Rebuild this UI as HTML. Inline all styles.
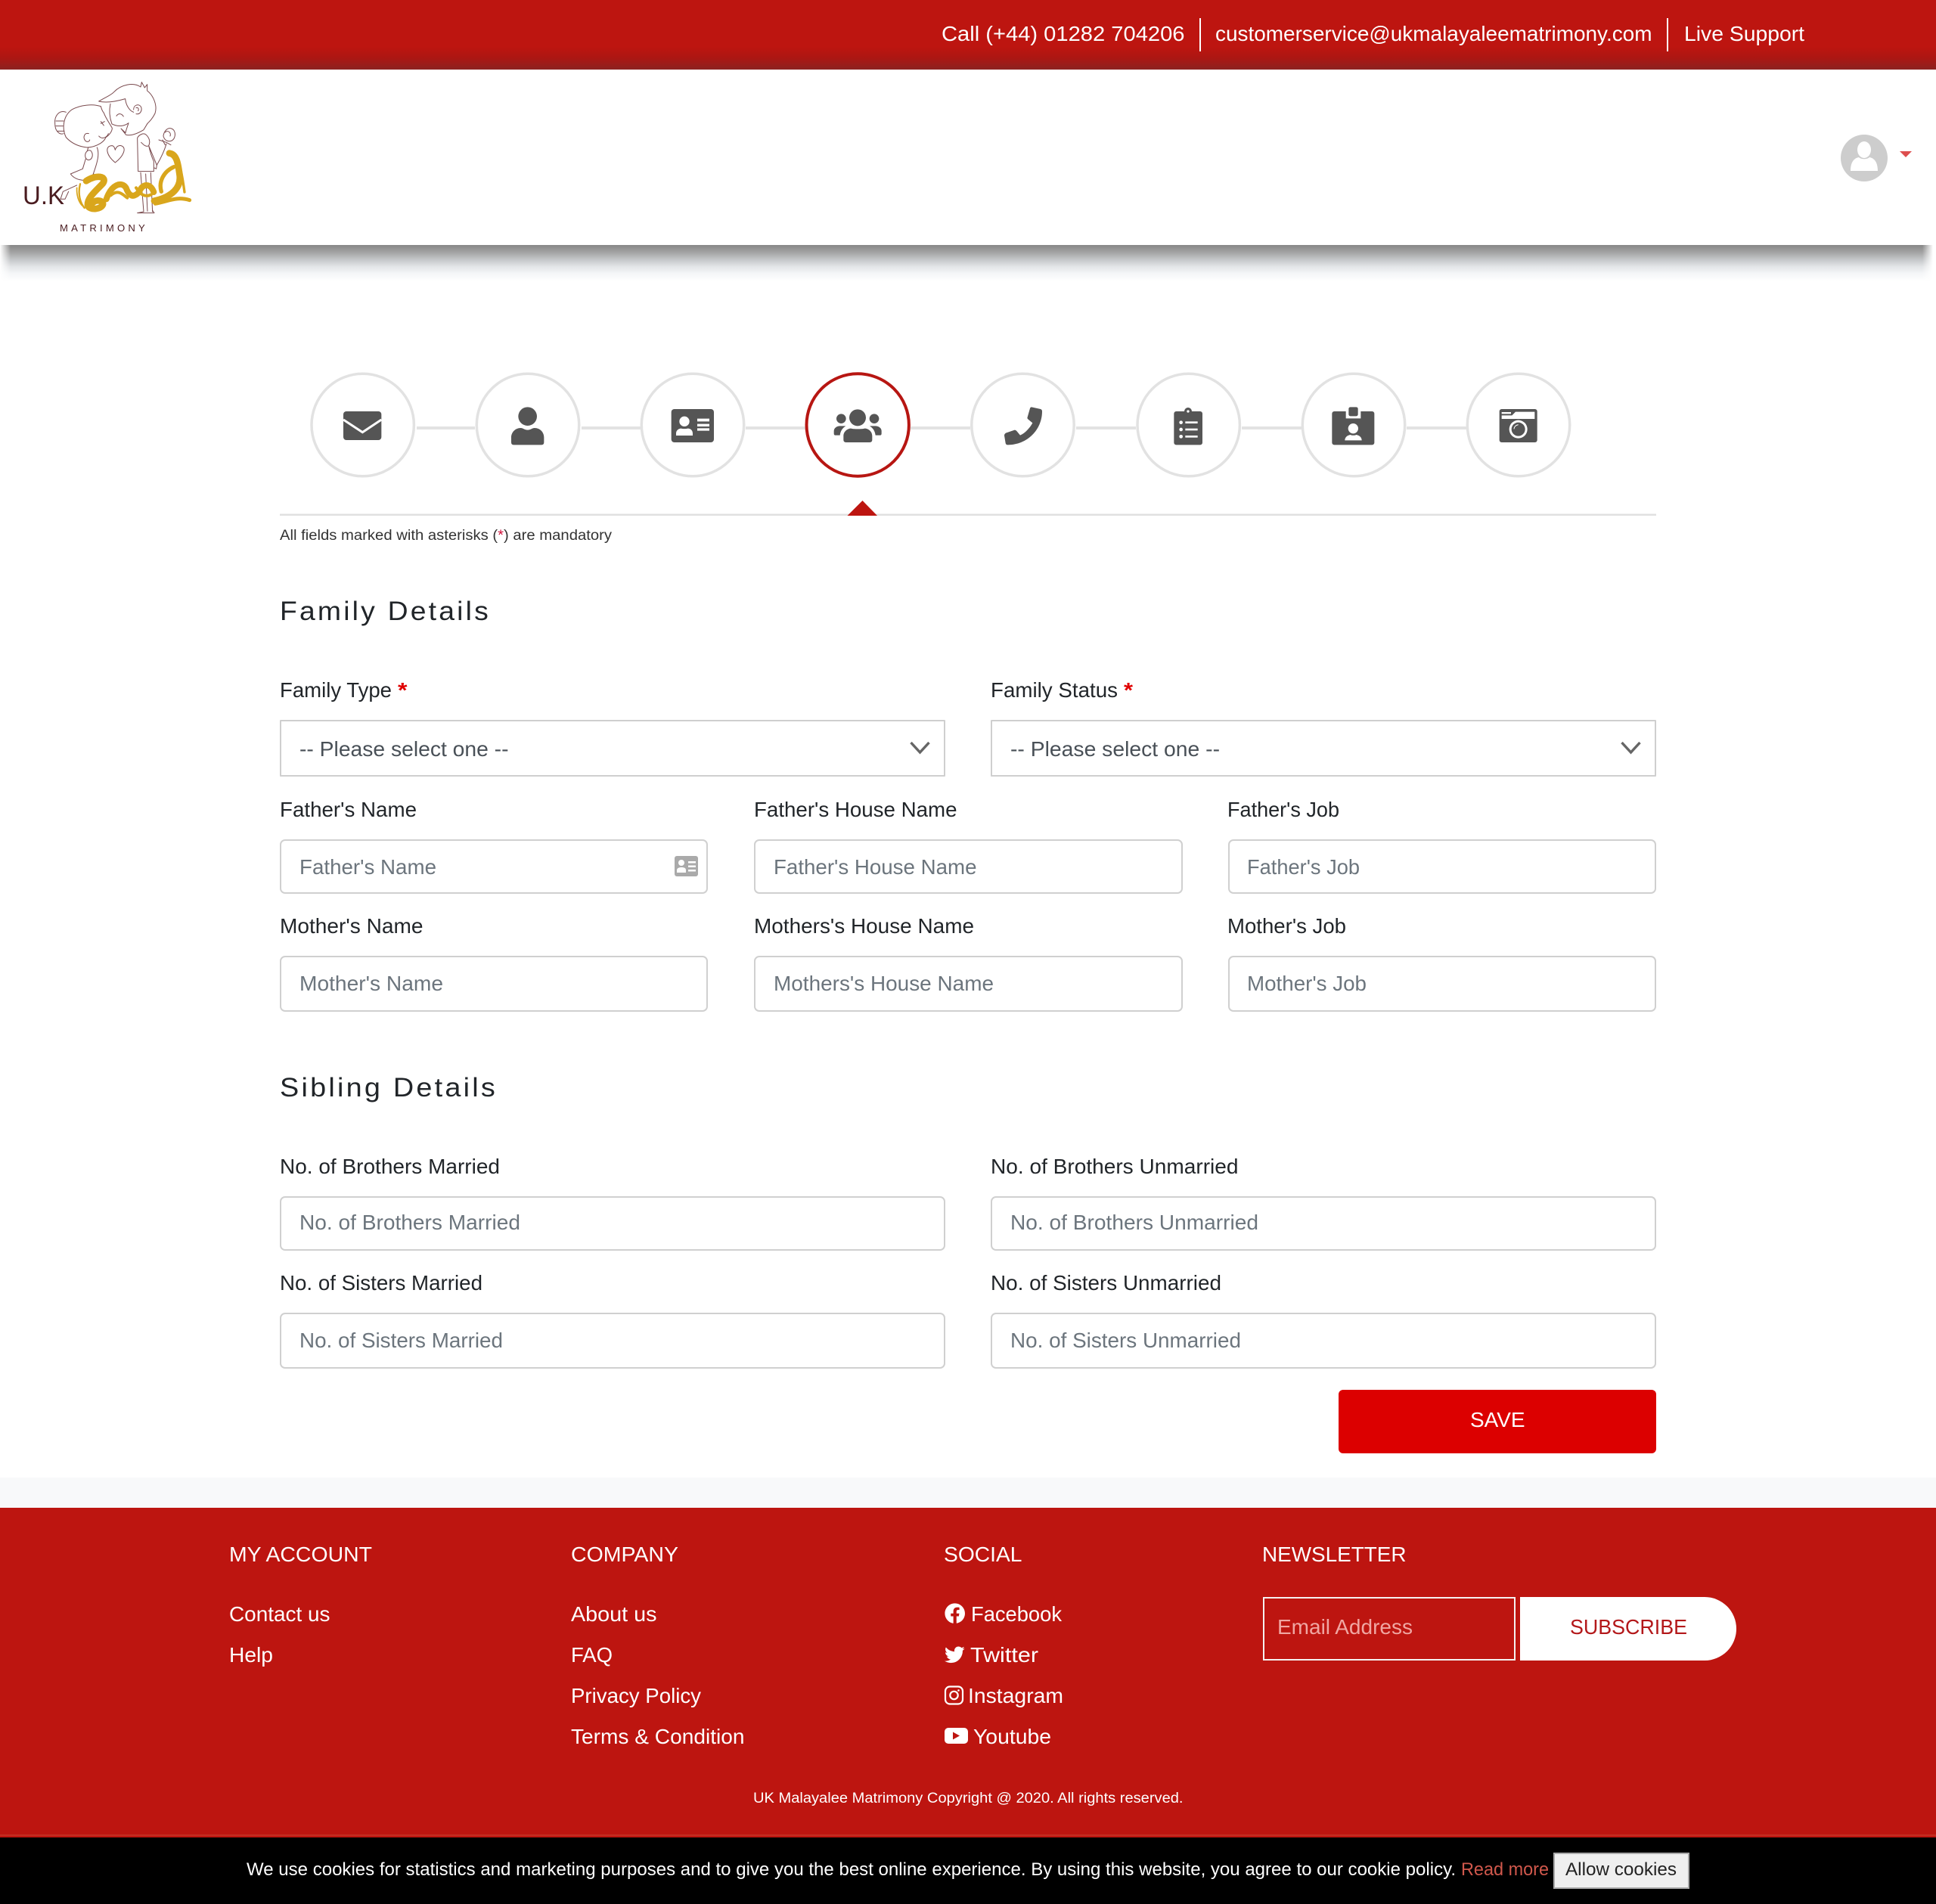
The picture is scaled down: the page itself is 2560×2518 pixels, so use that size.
<!DOCTYPE html>
<html lang="en"><head><meta charset="utf-8"><title>UK Malayalee Matrimony - Family Details</title>
<style>
html,body{margin:0;padding:0;background:#fff}
body{position:relative;width:2560px;height:2518px;overflow:hidden;font-family:"Liberation Sans",Arial,sans-serif;color:#212529}
.t{position:absolute;white-space:nowrap;line-height:1;font-size:27.5px;transform-origin:0 0;top:calc(var(--b)*1px - .8465em)}
.w{color:#fff}
.ph{color:#6c757d}
.sl{color:#495057}
.h{font-size:35px;letter-spacing:3px;color:#212529}
.r{color:#e00000;font-weight:700}
.box{position:absolute;box-sizing:border-box;display:block;margin:0;padding:0;background:#fff;border:2.5px solid #d0d0d0;border-radius:7px;outline:0}
.sel{border-radius:1px;border-color:#cfcfcf}
.abs{position:absolute}
svg{position:absolute;left:0;top:0}
</style></head><body>
<header>
<div class="abs" style="left:0;top:0;width:2560px;height:92px;background:linear-gradient(#bd1510 0,#bd1510 62px,#ad1612 76px,#8c2220 92px)"></div>
<div class="abs" style="left:0;top:324px;width:2560px;height:48px;background:linear-gradient(rgba(0,0,0,.47) 0,rgba(0,0,0,.37) 9px,rgba(5,15,25,.24) 19px,rgba(10,30,50,.11) 29px,rgba(20,50,90,.045) 38px,rgba(0,0,0,0) 48px);-webkit-mask-image:linear-gradient(90deg,transparent 0,#000 14px,#000 2542px,transparent 2556px)"></div>
<span class="t w" style="--b:54.5;left:1244.5px" w="321.5">Call (+44) 01282 704206</span>
<div class="abs" style="left:1586px;top:24px;width:2px;height:44px;background:#fff"></div>
<span class="t w" style="--b:54.5;left:1607px" w="577.5">customerservice@ukmalayaleematrimony.com</span>
<div class="abs" style="left:2204px;top:24px;width:2px;height:44px;background:#fff"></div>
<span class="t w" style="--b:54.5;left:2226.5px" w="159">Live Support</span>
<span class="t" style="--b:270.5;left:30px;font-size:34px;color:#4a1c20" w="55">U.K</span>
<span class="t" style="--b:307;left:79px;font-size:12.5px;letter-spacing:4px;color:#4a1c20" w="117">MATRIMONY</span>
</header>

<svg width="2560" height="2518" viewBox="0 0 2560 2518" style="z-index:0">
<!-- logo -->
<g transform="scale(.3333)" fill="none" stroke="#7a4a4e" stroke-width="3" stroke-linecap="round" stroke-linejoin="round">
<path d="M392 402C425 410 470 400 497 392C500 420 515 440 530 445M392 402C420 385 440 378 452 365C480 335 530 325 558 345L562 326L574 348L584 335L584 360C610 380 625 420 615 450C605 470 595 480 585 490"/>
<path d="M438 412C432 440 436 470 444 492M444 492C470 505 495 500 510 488C505 505 500 515 498 527L480 510L500 535C520 540 545 530 570 515L585 490"/>
<path d="M530 435C530 415 552 410 560 425C565 440 555 455 540 452M540 428C548 425 552 432 548 440"/>
<path d="M462 460C470 448 482 450 490 462"/>
<path d="M400 422C370 412 320 415 285 435C250 460 245 510 262 545C285 570 315 582 345 585C370 585 410 570 420 545C435 535 445 520 445 508C435 490 420 470 412 448C405 440 402 430 400 422Z"/>
<path d="M262 445C235 435 215 460 218 490C218 525 240 535 252 530M222 480H252M222 500H250M228 520H255"/>
<path d="M352 530C335 525 328 545 338 558C345 565 355 562 356 555"/>
<path d="M392 540C405 555 425 545 430 530M400 490L415 482M400 482L412 498"/>
<path d="M350 585L346 600M385 585C395 610 388 640 370 690M345 600C335 610 335 630 350 635C365 635 372 615 362 600C358 595 350 595 345 600M340 630L328 670L280 690C290 705 310 715 335 715L372 690"/>
<path d="M305 735L250 760L240 790L258 790L272 760"/>
<path d="M457 645C420 615 415 578 445 578C455 580 455 590 457 595C462 580 472 576 480 578C505 585 490 620 457 645Z"/>
<path d="M545 548C550 535 570 525 580 535C590 545 598 560 590 578C580 585 570 575 560 565M545 548L548 680L610 680L610 640C600 620 595 600 590 578M590 578L622 655L620 670L610 665"/>
<path d="M558 685L570 840M598 685L605 840M570 840L545 845H612L605 835M578 690L585 838"/>
<path d="M622 655C640 625 655 590 660 570M630 555L660 565L678 575M645 555L655 575"/>
<path d="M648 540C650 520 665 505 680 510C695 515 698 535 690 550C680 565 655 565 648 540ZM655 525C665 515 680 525 675 540"/>
<g stroke="#d9a61c" stroke-width="26">
<path d="M342 718C380 692 428 698 408 728C380 758 345 785 348 815C355 835 400 832 408 812C412 795 380 790 368 805"/>
<path d="M318 730C308 770 318 805 335 825" stroke-width="7"/><path d="M305 745C303 775 312 800 325 815" stroke-width="5"/>
<path d="M422 790C442 732 482 718 500 745C512 780 530 786 552 762C564 728 596 724 610 762" stroke-width="24"/>
<path d="M440 775C470 748 490 775 505 785M540 745C555 770 575 785 600 772" stroke-width="12"/>
<path d="M612 797C680 782 722 745 712 690C706 645 700 612 672 608" stroke-width="26"/>
<path d="M640 760C628 720 650 680 690 662" stroke-width="16"/>
<path d="M616 808C670 798 700 778 752 794" stroke-width="15"/>
<path d="M695 620C716 650 725 710 732 762" stroke-width="10"/>
</g>
</g>
<!-- avatar -->
<clipPath id="av"><circle cx="2465" cy="209" r="31"/></clipPath>
<circle cx="2465" cy="209" r="31" fill="#cdcdcd"/>
<g clip-path="url(#av)" fill="#fff"><ellipse cx="2465" cy="198" rx="9" ry="11"/><path d="M2447 226C2447 214 2452 209 2458 208C2461 211 2469 211 2472 208C2478 209 2483 214 2483 226Z"/></g>
<path d="M2512 200H2528L2520 208Z" fill="#dd4e4e"/>

<!-- step connectors -->
<g fill="#e3e3e3">
<rect x="551" y="564" width="77" height="4"/><rect x="769" y="564" width="78" height="4"/><rect x="986" y="564" width="79" height="4"/><rect x="1204" y="564" width="79" height="4"/><rect x="1423" y="564" width="79" height="4"/><rect x="1642" y="564" width="79" height="4"/><rect x="1860" y="564" width="79" height="4"/>
</g>
<g fill="#fff" stroke="#e2e2e2" stroke-width="3.5">
<circle cx="479.7" cy="562" r="67.7"/><circle cx="698" cy="562" r="67.7"/><circle cx="916" cy="562" r="67.7"/>
<circle cx="1134.2" cy="562" r="67.7" stroke="#b71612" stroke-width="4"/>
<circle cx="1352.5" cy="562" r="67.7"/><circle cx="1571.7" cy="562" r="67.7"/><circle cx="1790" cy="562" r="67.7"/><circle cx="2008" cy="562" r="67.7"/>
</g>
<!-- step icons -->
<g transform="translate(430 520) scale(.33333)" fill="#555">
<rect x="72" y="72" width="151" height="114" rx="12"/><path d="M72 105L148 155L223 105" fill="none" stroke="#fff" stroke-width="9"/>
<circle cx="803" cy="92" r="37"/>
<path d="M738 195V175C738 155 755 138 775 138C785 138 792 146 803 146C814 146 821 138 831 138C852 138 868 155 868 175V195Q868 205 858 205H748Q738 205 738 195Z"/>
<rect x="1373" y="63" width="169" height="132" rx="12"/>
<circle cx="1425" cy="112" r="20" fill="#fff"/><path d="M1392 168V160C1392 148 1402 140 1412 140C1418 142 1432 142 1438 140C1450 140 1458 148 1458 160V168Z" fill="#fff"/>
<path d="M1476 101H1524V112H1476ZM1476 122H1524V132H1476ZM1476 139H1524V149H1476Z" fill="#fff"/>
</g>
<g transform="translate(1090 520) scale(.33333)" fill="#555">
<circle cx="132" cy="97" r="33"/><circle cx="67" cy="101" r="19"/><circle cx="198" cy="101" r="19"/>
<path d="M38 160V150C38 138 50 130 62 130H85C72 138 64 150 62 167H45Q38 167 38 160ZM227 160V150C227 138 215 130 203 130H180C193 138 201 150 203 167H220Q227 167 227 160Z"/>
<path d="M76 185V170C76 152 92 140 106 140C115 143 150 143 160 140C175 140 190 152 190 170V185Q190 195 180 195H86Q76 195 76 185Z"/>
<path d="M822 55L858 63Q864 65 864 72C864 145 805 205 728 205Q720 205 719 198L714 168Q714 162 720 158L755 146Q760 146 763 150L777 167C797 158 815 138 826 118L808 103Q804 100 806 95L816 60Q818 55 822 55Z"/>
<rect x="1387" y="72" width="113" height="133" rx="9"/><circle cx="1443" cy="72" r="15"/><circle cx="1443" cy="72" r="5" fill="#fff"/>
<g fill="#fff"><circle cx="1415" cy="116" r="7"/><circle cx="1415" cy="144" r="7"/><circle cx="1415" cy="172" r="7"/><rect x="1432" y="112" width="49" height="8"/><rect x="1432" y="140" width="49" height="8"/><rect x="1432" y="168" width="49" height="8"/></g>
</g>
<g transform="translate(1740 520) scale(.33333)" fill="#555">
<rect x="64" y="72" width="168" height="133" rx="9"/>
<path d="M119 72H178V100H119Z" fill="#fff"/><rect x="130" y="55" width="37" height="36" rx="7"/>
<circle cx="148" cy="140" r="20" fill="#fff"/><path d="M115 187C115 175 125 167 137 165C142 168 155 168 160 165C172 167 182 175 182 187Z" fill="#fff"/>
<rect x="728" y="63" width="150" height="132" rx="9"/>
<path d="M737 88H778L792 74H868V102H737Z" fill="#fff"/><rect x="737" y="75" width="37" height="7" fill="#fff"/>
<circle cx="803" cy="143" r="36" fill="#fff"/><circle cx="803" cy="143" r="27"/>
<path d="M786 142C787 132 793 127 803 125" fill="none" stroke="#fff" stroke-width="3"/>
</g>
<!-- divider + pointer -->
<rect x="370" y="679.5" width="1820" height="2.5" fill="#e0e0e0"/>
<path d="M1140.5 662L1160 682H1120.5Z" fill="#bd1510"/>
</svg>

<main>
<span class="t" style="--b:715;left:370px;font-size:19px;color:#333" w="439">All fields marked with asterisks (<span style="color:#d0103a">*</span>) are mandatory</span>

<h2 class="t h" style="--b:820.5;left:370px;margin:0;font-weight:400" w="279">Family Details</h2>
<label class="t" style="--b:922;left:370px" w="148">Family Type</label><span class="t r" style="--b:922;left:525.5px" w="12.5">*</span>
<label class="t" style="--b:922;left:1310px" w="168">Family Status</label><span class="t r" style="--b:922;left:1485.5px" w="12">*</span>
<div class="box sel" style="left:370px;top:952px;width:880px;height:75px"></div>
<div class="box sel" style="left:1310px;top:952px;width:880px;height:75px"></div>
<span class="t sl" style="--b:1000;left:396px" w="276.5">-- Please select one --</span>
<span class="t sl" style="--b:1000;left:1335.5px" w="277">-- Please select one --</span>

<label class="t" style="--b:1080.5;left:370px" w="181">Father's Name</label>
<label class="t" style="--b:1080.5;left:996.5px" w="268.5">Father's House Name</label>
<label class="t" style="--b:1080.5;left:1623px" w="148">Father's Job</label>
<input class="box" style="left:370px;top:1110px;width:566px;height:72px" readonly>
<input class="box" style="left:996.5px;top:1110px;width:567px;height:72px" readonly>
<input class="box" style="left:1624px;top:1110px;width:566px;height:72px" readonly>
<span class="t ph" style="--b:1156;left:395.5px" w="181">Father's Name</span>
<span class="t ph" style="--b:1156;left:1022.5px" w="268.5">Father's House Name</span>
<span class="t ph" style="--b:1156;left:1648.5px" w="149">Father's Job</span>

<label class="t" style="--b:1234.5;left:370px" w="189.5">Mother's Name</label>
<label class="t" style="--b:1234.5;left:996.5px" w="291">Mothers's House Name</label>
<label class="t" style="--b:1234.5;left:1623px" w="157">Mother's Job</label>
<input class="box" style="left:370px;top:1264px;width:566px;height:73.5px" readonly>
<input class="box" style="left:996.5px;top:1264px;width:567px;height:73.5px" readonly>
<input class="box" style="left:1624px;top:1264px;width:566px;height:73.5px" readonly>
<span class="t ph" style="--b:1310;left:395.5px" w="190">Mother's Name</span>
<span class="t ph" style="--b:1310;left:1022.5px" w="291">Mothers's House Name</span>
<span class="t ph" style="--b:1310;left:1648.5px" w="158">Mother's Job</span>

<h2 class="t h" style="--b:1450.5;left:370px;margin:0;font-weight:400" w="288">Sibling Details</h2>
<label class="t" style="--b:1552;left:370px" w="291">No. of Brothers Married</label>
<label class="t" style="--b:1552;left:1310px" w="327.5">No. of Brothers Unmarried</label>
<input class="box" style="left:370px;top:1582px;width:880px;height:71.5px" readonly>
<input class="box" style="left:1310px;top:1582px;width:880px;height:71.5px" readonly>
<span class="t ph" style="--b:1626.5;left:395.5px" w="292">No. of Brothers Married</span>
<span class="t ph" style="--b:1626.5;left:1336px" w="328">No. of Brothers Unmarried</span>

<label class="t" style="--b:1706.5;left:370px" w="268">No. of Sisters Married</label>
<label class="t" style="--b:1706.5;left:1310px" w="305">No. of Sisters Unmarried</label>
<input class="box" style="left:370px;top:1736px;width:880px;height:73.5px" readonly>
<input class="box" style="left:1310px;top:1736px;width:880px;height:73.5px" readonly>
<span class="t ph" style="--b:1782;left:395.5px" w="269">No. of Sisters Married</span>
<span class="t ph" style="--b:1782;left:1336px" w="305">No. of Sisters Unmarried</span>

<div class="abs" style="left:1770px;top:1838px;width:420px;height:84px;background:#dc0000;border-radius:6px"></div>
<span class="t w" style="--b:1887.5;left:1943.5px" w="72.5">SAVE</span>
</main>

<div class="abs" style="left:0;top:1954px;width:2560px;height:40px;background:#f8f9fa"></div>
<footer>
<div class="abs" style="left:0;top:1994px;width:2560px;height:436px;background:#bd1510"></div>
<div class="abs" style="left:0;top:2426px;width:2560px;height:2px;background:#c42d22"></div>
<div class="abs" style="left:0;top:2430px;width:2560px;height:88px;background:#000"></div>

<span class="t w" style="--b:2065.5;left:303px" w="189">MY ACCOUNT</span>
<span class="t w" style="--b:2065.5;left:755px" w="142">COMPANY</span>
<span class="t w" style="--b:2065.5;left:1248px" w="103.5">SOCIAL</span>
<span class="t w" style="--b:2065.5;left:1669px" w="190.5">NEWSLETTER</span>

<a class="t w" style="--b:2144;left:303px" w="133.5">Contact us</a>
<a class="t w" style="--b:2198;left:303px" w="58">Help</a>
<a class="t w" style="--b:2144;left:755px" w="113.5">About us</a>
<a class="t w" style="--b:2198;left:755px" w="55">FAQ</a>
<a class="t w" style="--b:2252;left:755px" w="172">Privacy Policy</a>
<a class="t w" style="--b:2306;left:755px" w="229.5">Terms &amp; Condition</a>
<a class="t w" style="--b:2144;left:1283.5px" w="120">Facebook</a>
<a class="t w" style="--b:2198;left:1283px" w="90">Twitter</a>
<a class="t w" style="--b:2252;left:1279.5px" w="126">Instagram</a>
<a class="t w" style="--b:2306;left:1286.5px" w="103">Youtube</a>

<svg width="2560" height="2518" viewBox="0 0 2560 2518">
<g transform="translate(1249 2120) scale(.0535)" fill="#fff"><path d="M504 256C504 119 393 8 256 8S8 119 8 256c0 123.78 90.69 226.38 209.25 245V327.69h-63V256h63v-54.64c0-62.15 37-96.48 93.67-96.48 27.14 0 55.52 4.84 55.52 4.84v61h-31.28c-30.8 0-40.41 19.12-40.41 38.73V256h68.78l-11 71.69h-57.78V501C413.31 482.38 504 379.78 504 256z"/></g>
<g transform="translate(1249 2175) scale(.052)" fill="#fff"><path d="M459.37 151.716c.325 4.548.325 9.097.325 13.645 0 138.72-105.583 298.558-298.558 298.558-59.452 0-114.68-17.219-161.137-47.106 8.447.974 16.568 1.299 25.34 1.299 49.055 0 94.213-16.568 130.274-44.832-46.132-.975-84.792-31.188-98.112-72.772 6.498.974 12.995 1.624 19.818 1.624 9.421 0 18.843-1.3 27.614-3.573-48.081-9.747-84.143-51.98-84.143-102.985v-1.299c13.969 7.797 30.214 12.67 47.431 13.319-28.264-18.843-46.781-51.005-46.781-87.391 0-19.492 5.197-37.36 14.294-52.954 51.655 63.675 129.3 105.258 216.365 109.807-1.624-7.797-2.599-15.918-2.599-24.04 0-57.828 46.782-104.934 104.934-104.934 30.213 0 57.502 12.67 76.67 33.137 23.715-4.548 46.456-13.32 66.599-25.34-7.798 24.366-24.366 44.833-46.132 57.827 21.117-2.273 41.584-8.122 60.426-16.243-14.292 20.791-32.161 39.308-52.628 54.253z"/></g>
<rect x="1250" y="2230.5" width="23" height="23" rx="6" fill="none" stroke="#fff" stroke-width="2.2"/><circle cx="1261.5" cy="2242" r="5.2" fill="none" stroke="#fff" stroke-width="2.2"/><circle cx="1267.5" cy="2235.5" r="1.3" fill="#fff"/>
<rect x="1249" y="2285" width="31" height="21" rx="5" fill="#fff"/><path d="M1260 2290.5L1269 2295.5L1260 2300.5Z" fill="#bd1510"/>
<!-- select chevrons -->
<path d="M1204.5 982L1216.5 995L1228.5 982M2144.5 982L2156.5 995L2168.5 982" fill="none" stroke="#666" stroke-width="3.4"/>
<!-- father's name icon -->
<rect x="892" y="1132" width="31" height="27" rx="3" fill="#aaa"/>
<circle cx="901" cy="1141" r="4" fill="#fff"/><path d="M895 1154V1151C895 1148 898 1147 901 1147C905 1147 907 1148 907 1151V1154Z" fill="#fff"/>
<path d="M910 1139H920V1141.5H910ZM910 1144.5H920V1147H910ZM910 1150H920V1152.5H910Z" fill="#fff"/>
</svg>

<input class="box" style="left:1670px;top:2112px;width:333.5px;height:84px;background:#bd1510;border:2.5px solid #f5f0f0;border-radius:0" readonly>
<span class="t" style="--b:2161.5;left:1689px;color:#f0a6a2" w="179">Email Address</span>
<div class="abs" style="left:2010px;top:2112px;width:286px;height:84px;background:#fff;border-radius:0 42px 42px 0"></div>
<span class="t" style="--b:2161.5;left:2076px;color:#b3181a" w="155">SUBSCRIBE</span>

<span class="t w" style="--b:2385.5;left:995.5px;font-size:19px" w="568.5">UK Malayalee Matrimony Copyright @ 2020. All rights reserved.</span>

<span class="t w" style="--b:2481;left:325.5px;font-size:24px" w="1599">We use cookies for statistics and marketing purposes and to give you the best online experience. By using this website, you agree to our cookie policy.</span>
<a class="t" style="--b:2481;left:1931.5px;font-size:24px;color:#d0584c" w="116">Read more</a>
<div class="abs" style="box-sizing:border-box;left:2054px;top:2450px;width:179.5px;height:47.5px;background:#efefef;border:2.5px solid #a9a9a9"></div>
<span class="t" style="--b:2481;left:2070px;font-size:24px;color:#222" w="147">Allow cookies</span>
</footer>
<script>
document.querySelectorAll('[w]').forEach(function(e){
  var target=parseFloat(e.getAttribute('w')),cur=e.getBoundingClientRect().width;
  if(cur>0)e.style.transform='scaleX('+(target/cur)+')';
});
</script>
</body></html>
